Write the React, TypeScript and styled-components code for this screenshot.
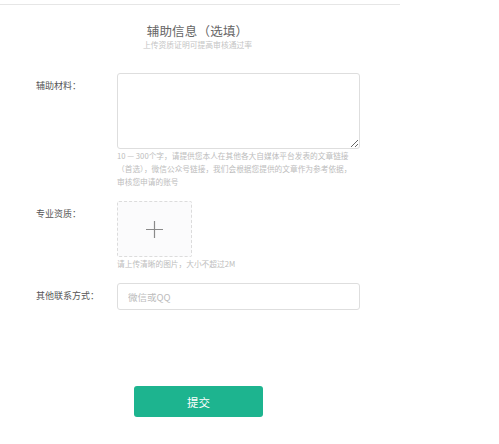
import React from 'react'
import styled, { createGlobalStyle } from 'styled-components'

const GlobalStyle = createGlobalStyle`
  html, body {
    margin: 0;
    padding: 0;
    background: #fff;
    font-family: "Noto Sans CJK SC", "Noto Sans", sans-serif;
  }
`

const App: React.FC = () => {
  return (
    <>
      <GlobalStyle />
      <Page>
        <Header>
          <Title>辅助信息（选填）</Title>
          <Subtitle>上传资质证明可提高审核通过率</Subtitle>
        </Header>

        <Row>
          <Label>辅助材料：</Label>
          <Field>
            <TextArea />
            <Hint>
              10 — 300个字，请提供您本人在其他各大自媒体平台发表的文章链接（首选），微信公众号链接，我们会根据您提供的文章作为参考依据，审核您申请的账号
            </Hint>
          </Field>
        </Row>

        <Row $gap={13}>
          <Label>专业资质：</Label>
          <Field>
            <Upload type="button" aria-label="上传图片">
              <svg width="17" height="17" viewBox="0 0 17 17">
                <path d="M8.5 0 V17 M0 8.5 H17" stroke="#8a8a8a" strokeWidth="1.2" fill="none" />
              </svg>
            </Upload>
            <Hint>请上传清晰的图片，大小不超过2M</Hint>
          </Field>
        </Row>

        <Row $gap={13}>
          <Label>其他联系方式：</Label>
          <Field>
            <Input placeholder="微信或QQ" />
          </Field>
        </Row>

        <Actions>
          <SubmitButton type="button">提交</SubmitButton>
        </Actions>
      </Page>
    </>
  )
}

export default App

const Page = styled.div`
  width: 400px;
  margin-top: 4px;
  border-top: 1px solid #e6e6e6;
  padding-bottom: 20px;
`

const Header = styled.div`
  display: flex;
  flex-direction: column;
  align-items: center;
  padding-top: 18px;
  padding-right: 5px;
`

const Title = styled.h2`
  margin: 0;
  font-size: 12.5px;
  line-height: 16px;
  font-weight: 400;
  color: #666;
  letter-spacing: 0.2px;
`

const Subtitle = styled.p`
  margin: 0;
  font-size: 7.8px;
  line-height: 12px;
  color: #c4c4c4;
`

const Row = styled.div<{ $gap?: number }>`
  display: flex;
  align-items: flex-start;
  margin-top: ${({ $gap }) => ($gap ?? 22)}px;
  padding-left: 36px;
`

const Label = styled.label`
  width: 81px;
  flex-shrink: 0;
  padding-top: 7px;
  font-size: 9px;
  line-height: 12px;
  color: #555;
`

const Field = styled.div`
  display: flex;
  flex-direction: column;
  width: 243px;
`

const TextArea = styled.textarea`
  box-sizing: border-box;
  width: 243px;
  height: 76px;
  border: 1px solid #dedede;
  border-radius: 3px;
  padding: 6px 10px;
  font-family: inherit;
  font-size: 9px;
  outline: none;
  margin: 0;
`

const Hint = styled.p`
  margin: 0;
  width: 239px;
  font-size: 7.7px;
  line-height: 13px;
  color: #bdbdbd;
`

const Upload = styled.button`
  box-sizing: border-box;
  width: 75px;
  height: 56px;
  border: 1px dashed #dcdcdc;
  border-radius: 2px;
  background: #fbfbfc;
  display: flex;
  align-items: center;
  justify-content: center;
  padding: 0;
  cursor: pointer;
`

const Input = styled.input`
  box-sizing: border-box;
  width: 243px;
  height: 27px;
  border: 1px solid #dedede;
  border-radius: 3px;
  padding: 0 10px;
  font-family: inherit;
  font-size: 9.5px;
  color: #555;
  outline: none;

  &::placeholder {
    color: #bcbcbc;
  }
`

const Actions = styled.div`
  display: flex;
  padding-left: 134px;
  margin-top: 76px;
`

const SubmitButton = styled.button`
  width: 129px;
  height: 31px;
  border: none;
  border-radius: 3px;
  background: #1db48f;
  color: #fff;
  font-family: inherit;
  font-size: 11.5px;
  cursor: pointer;
`
